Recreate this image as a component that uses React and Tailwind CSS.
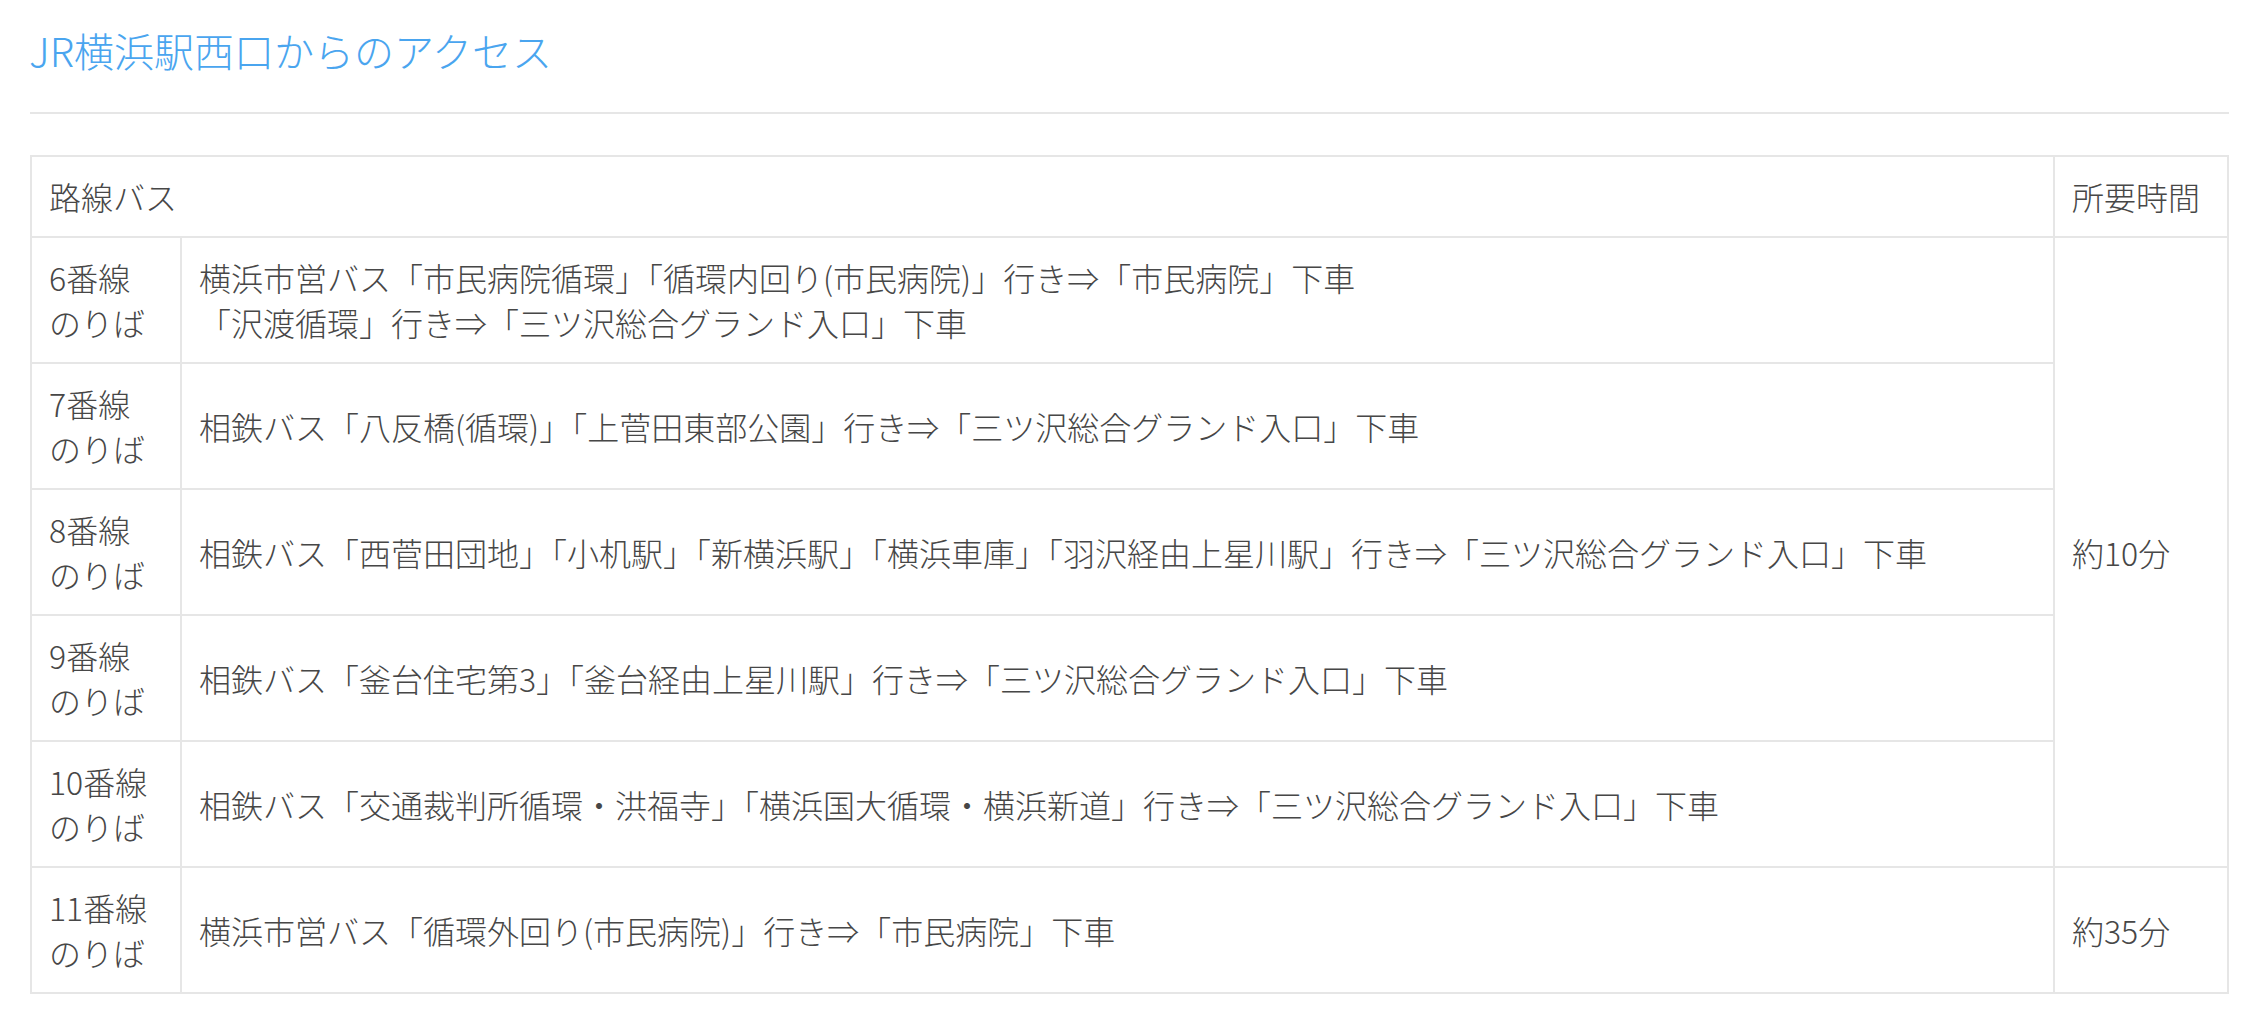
import React from "react";

const rows = [
  {
    line: "6",
    text: (
      <>
        横浜市営バス「市民病院循環」「循環内回り(市民病院)」行き⇒「市民病院」下車
        <br />
        「沢渡循環」行き⇒「三ツ沢総合グランド入口」下車
      </>
    ),
  },
  { line: "7", text: "相鉄バス「八反橋(循環)」「上菅田東部公園」行き⇒「三ツ沢総合グランド入口」下車" },
  {
    line: "8",
    text: "相鉄バス「西菅田団地」「小机駅」「新横浜駅」「横浜車庫」「羽沢経由上星川駅」行き⇒「三ツ沢総合グランド入口」下車",
  },
  { line: "9", text: "相鉄バス「釜台住宅第3」「釜台経由上星川駅」行き⇒「三ツ沢総合グランド入口」下車" },
  {
    line: "10",
    text: "相鉄バス「交通裁判所循環・洪福寺」「横浜国大循環・横浜新道」行き⇒「三ツ沢総合グランド入口」下車",
  },
];

const cell = "border-2 border-[#e6e6e6] px-[17px] py-[17px] align-middle";

export default function App() {
  return (
    <div
      className="min-h-screen bg-white pl-[30px] pr-[31px] pt-[22px] text-[#474747] font-light"
      style={{ fontFamily: '"Noto Sans CJK JP", "Noto Sans", sans-serif' }}
    >
      <h2 className="-ml-[1px] text-[40px] leading-[56px] font-light text-[#4aa5ef]">
        JR横浜駅西口からのアクセス
      </h2>
      <hr className="mt-[34px] border-0 h-[2px] bg-[#e6e6e6]" />
      <table className="mt-[41px] w-full table-fixed border-collapse text-[32px] leading-[45px]">
        <colgroup>
          <col className="w-[150px]" />
          <col />
          <col className="w-[174px]" />
        </colgroup>
        <thead>
          <tr>
            <th colSpan={2} className={`${cell} py-[16px] text-left font-light`}>
              路線バス
            </th>
            <th className={`${cell} py-[16px] text-left font-light`}>所要時間</th>
          </tr>
        </thead>
        <tbody>
          {rows.map((r, i) => (
            <tr key={r.line}>
              <td className={cell}>
                {r.line}番線
                <br />
                のりば
              </td>
              <td className={cell}>{r.text}</td>
              {i === 0 && (
                <td rowSpan={5} className={cell}>
                  約10分
                </td>
              )}
            </tr>
          ))}
          <tr>
            <td className={cell}>
              11番線
              <br />
              のりば
            </td>
            <td className={cell}>横浜市営バス「循環外回り(市民病院)」行き⇒「市民病院」下車</td>
            <td className={cell}>約35分</td>
          </tr>
        </tbody>
      </table>
    </div>
  );
}
